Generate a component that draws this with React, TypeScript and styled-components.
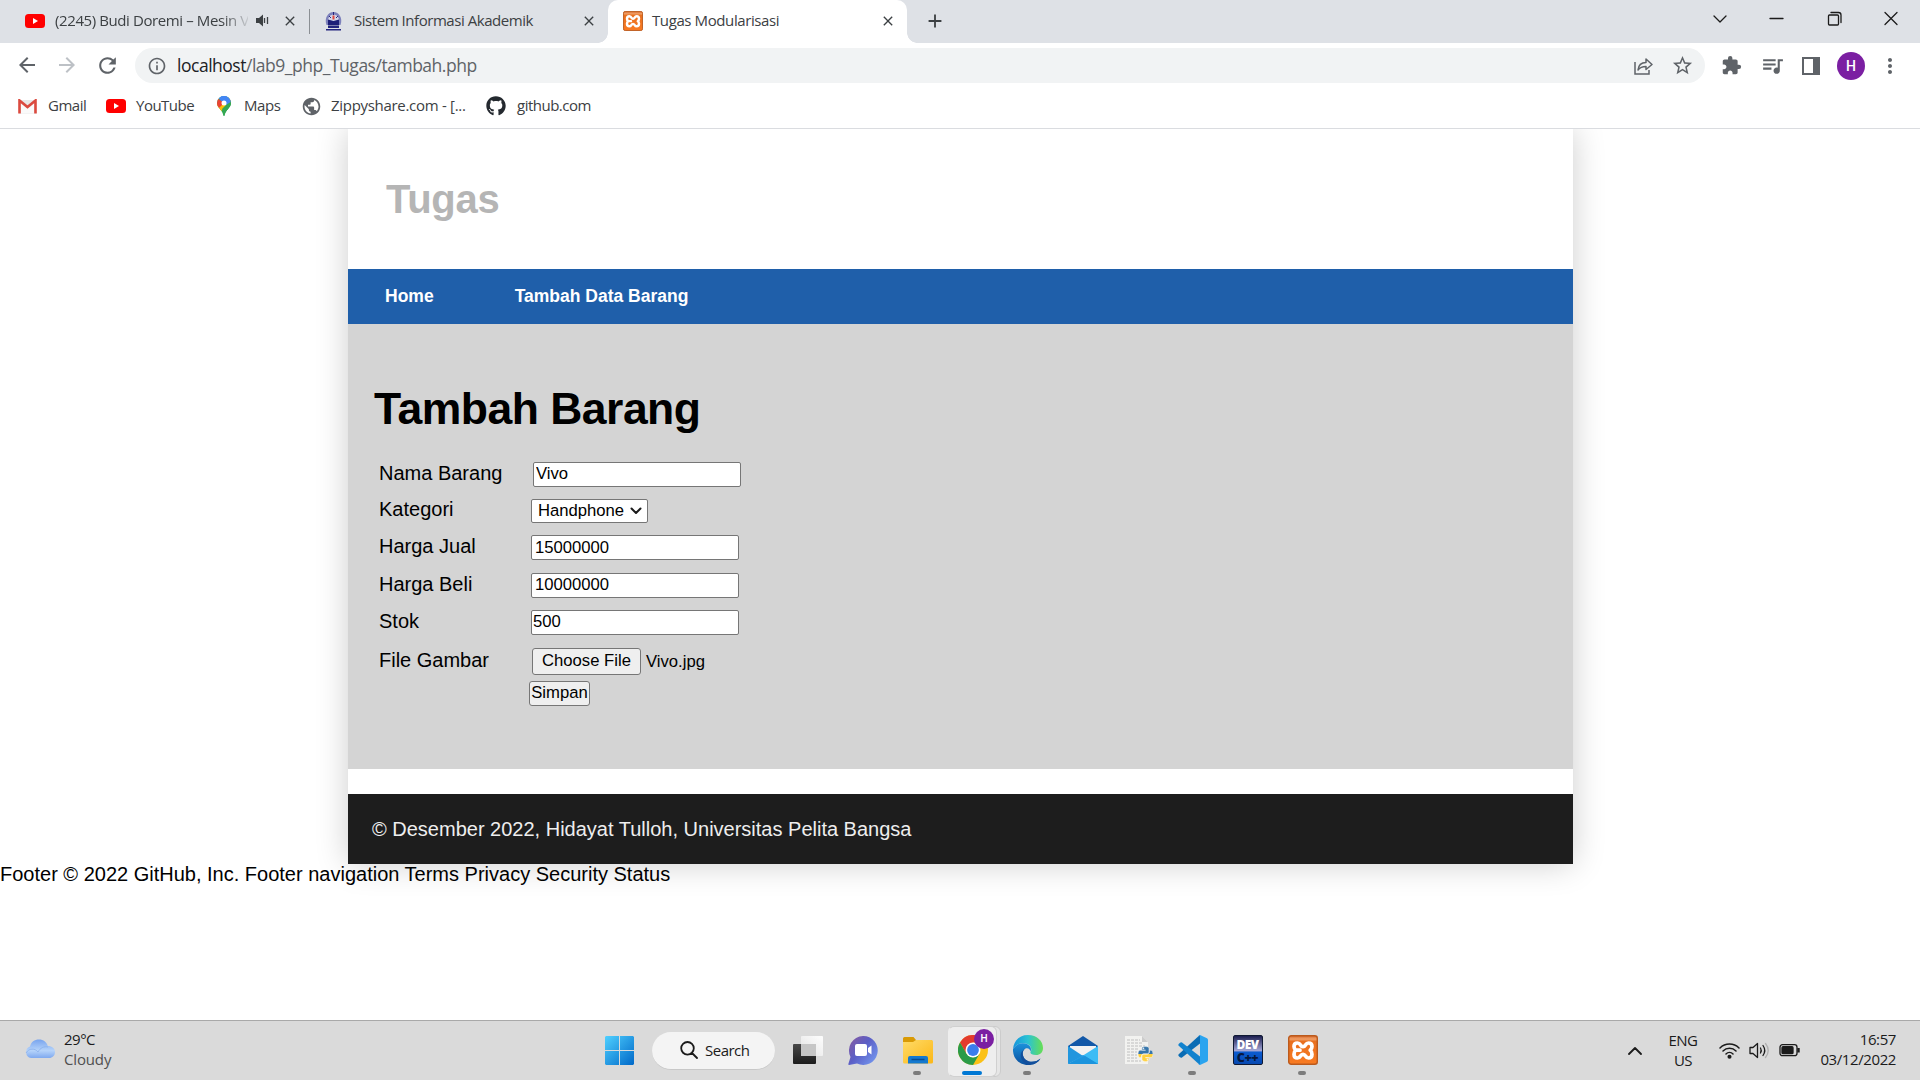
import React from 'react';
import styled, { createGlobalStyle } from 'styled-components';
import { MdExtension, MdQueueMusic, MdStarBorder, MdMoreVert, MdPublic, MdClose, MdAdd, MdInfoOutline, MdArrowBack, MdArrowForward, MdRefresh } from 'react-icons/md';
import { FaGithub, FaPython } from 'react-icons/fa';

const Global = createGlobalStyle`
  * { box-sizing: border-box; }
  body { margin: 0; background: #fff; overflow: hidden; }
  svg { display: block; flex: none; }
`;

const ui = `"Open Sans", "Noto Sans", sans-serif`;
const arial = `"Liberation Sans", Arial, sans-serif`;

const Screen = styled.div`
  width: 1920px;
  height: 1080px;
  display: flex;
  flex-direction: column;
  overflow: hidden;
`;

/* ---------- browser chrome ---------- */
const TabStrip = styled.div`
  height: 43px;
  background: #dee1e6;
  display: flex;
  color: #3c4043;
`;
const Tab = styled.div<{ $w: number; $pad: number; $active?: boolean }>`
  position: relative;
  width: ${p => p.$w}px;
  height: 43px;
  padding: 0 ${p => (p.$active ? 11 : 11)}px 2px ${p => p.$pad}px;
  display: flex;
  align-items: center;
  background: ${p => (p.$active ? '#fff' : 'transparent')};
  border-radius: 10px 10px 0 0;
  ${p => p.$active && `
    &::before, &::after {
      content: ''; position: absolute; bottom: 0; width: 10px; height: 10px;
    }
    &::before { left: -10px; background: radial-gradient(circle at 0 0, transparent 9.5px, #fff 10px); }
    &::after { right: -10px; background: radial-gradient(circle at 100% 0, transparent 9.5px, #fff 10px); }
  `}
`;
const Label = styled.span<{ $w?: number; $gap: number; $ls?: number; $fade?: boolean }>`
  font: 15px/20px ${ui};
  letter-spacing: ${p => p.$ls ?? -0.4}px;
  white-space: nowrap;
  margin-left: ${p => p.$gap}px;
  padding-bottom: 2px;
  ${p => p.$w && `width: ${p.$w}px;`}
  flex: none;
  ${p => p.$fade && 'mask-image: linear-gradient(90deg, #000 86%, transparent 102%);'}
`;
const TabEnd = styled.div`
  margin-left: auto;
  display: flex;
  align-items: center;
  gap: 13px;
`;
const Divider = styled.i`
  width: 1px;
  height: 25px;
  margin-top: 9px;
  background: #8b8f94;
`;
const NewTab = styled.div`
  padding: 10px 0 0 17px;
`;
const Caption = styled.div`
  margin-left: auto;
  padding: 9px 19px 0 0;
  display: flex;
  gap: 37.5px;
  color: #1b1b1b;
`;

const Toolbar = styled.div`
  height: 45px;
  display: flex;
  align-items: center;
  padding: 0 14px 0 15px;
  background: #fff;
  color: #5f6368;
`;
const NavButtons = styled.div`
  display: flex;
  gap: 16px;
  width: 120px;
`;
const Omnibox = styled.div`
  width: 1570px;
  flex: none;
  height: 35px;
  border-radius: 18px;
  background: #f1f3f4;
  display: flex;
  align-items: center;
  padding: 0 11px 0 12px;
  gap: 18px;
`;
const Url = styled.div`
  font: 17.5px/24px ${ui};
  letter-spacing: -0.48px;
  margin: 0 auto 1px -8px;
  color: #5f6368;
  b { font-weight: 400; color: #202124; }
`;
const Actions = styled.div`
  margin-left: 16px;
  display: flex;
  align-items: center;
`;
const Avatar = styled.div<{ $size: number; $gap: number }>`
  width: ${p => p.$size}px;
  height: ${p => p.$size}px;
  margin: 0 ${p => p.$gap}px;
  border-radius: 50%;
  background: #7b1fa2;
  color: #fff;
  font: 500 ${p => p.$size / 2}px/${p => p.$size}px Roboto, sans-serif;
  text-align: center;
`;
const Bookmarks = styled.div`
  height: 41px;
  border-bottom: 1px solid #dadce0;
  display: flex;
  align-items: center;
  padding: 0 0 4px 18px;
  color: #3c4043;
`;
const Bookmark = styled.div<{ $w: number }>`
  display: flex;
  align-items: center;
  width: ${p => p.$w}px;
`;

/* ---------- web page ---------- */
const Viewport = styled.main`
  height: 891px;
  overflow: hidden;
  font-family: ${arial};
  font-size: 20px;
  color: #000;
`;
const Container = styled.div`
  width: 1225px;
  height: 735px;
  margin-left: 348px;
  background: #fff;
  box-shadow: 0 0 31px rgba(0, 0, 0, 0.2);
`;
const Header = styled.header`
  height: 140px;
  padding: 47px 0 0 38px;
  h1 { margin: 0; font-size: 40px; line-height: 46px; letter-spacing: -0.3px; color: #b5b5b5; }
`;
const Menu = styled.nav`
  height: 55px;
  padding-left: 37px;
  display: flex;
  gap: 81px;
  background: #1f5faa;
  color: #fff;
  font-weight: 700;
  font-size: 17.5px;
  line-height: 54px;
`;
const Content = styled.section`
  height: 445px;
  background: #d4d4d4;
  padding: 59px 26px 0 26px;
  h1 { margin: 0 0 28px; font-size: 44.5px; line-height: 51px; letter-spacing: -0.5px; }
`;
const Row = styled.div<{ $h: number }>`
  height: ${p => p.$h}px;
  display: flex;
  align-items: flex-start;
  padding-left: 5px;
`;
const RowLabel = styled.label<{ $lift: number; $w: number }>`
  width: ${p => p.$w}px;
  line-height: 24px;
  margin-top: ${p => -p.$lift}px;
`;
const Input = styled.input<{ $indent: number; $base: number }>`
  width: 208px;
  height: 25px;
  border: 1px solid #767676;
  border-radius: 2px;
  background: #fff;
  padding: 0 0 ${p => p.$base}px ${p => p.$indent}px;
  margin: 0;
  color: #000;
  font: 16.67px/20px ${arial};
  outline: none;
`;
const Select = styled.div`
  width: 117px;
  height: 24px;
  border: 1px solid #767676;
  border-radius: 2px;
  background: #fff;
  display: flex;
  align-items: center;
  justify-content: space-between;
  padding: 0 5px 0 6px;
  font: 16.67px/20px ${arial};
`;
const Button = styled.button<{ $w: number; $h: number }>`
  width: ${p => p.$w}px;
  height: ${p => p.$h}px;
  border: 1px solid #767676;
  border-radius: 3px;
  background: #efefef;
  padding: 0 0 2px;
  margin: 0;
  color: #000;
  font: 16.67px/20px ${arial};
  white-space: nowrap;
`;
const FileName = styled.span`
  font-size: 16.67px;
  line-height: 20px;
  padding: 4px 0 0 5px;
`;
const Footer = styled.footer`
  height: 70px;
  margin-top: 25px;
  padding: 0 24px;
  background: #1d1d1d;
  color: #eee;
  line-height: 71px;
`;
const Trailing = styled.div`
  position: relative;
  line-height: 23px;
  margin-top: -1px;
`;

/* ---------- taskbar ---------- */
const Taskbar = styled.div`
  height: 60px;
  border-top: 1px solid #a9a9a9;
  background: #dadada;
  display: flex;
  font: 15px/20px ${ui};
  color: #1b1b1b;
`;
const Weather = styled.div`
  width: 592px;
  padding: 8px 0 0 25px;
  display: flex;
  gap: 9px;
  svg { margin-top: 10px; }
  p { margin: 0; letter-spacing: -0.5px; }
  p + p { color: #505050; letter-spacing: -0.15px; }
`;
const Apps = styled.div`
  display: flex;
  align-items: center;
`;
const Slot = styled.div<{ $active?: boolean; $open?: boolean }>`
  position: relative;
  width: 55px;
  height: 59px;
  display: flex;
  align-items: center;
  justify-content: center;
  padding-bottom: 1px;
  ${p => p.$active && `
    &::before { content: ''; position: absolute; left: 6px; top: 5px; width: 48px; height: 49px; border-radius: 6px; background: #e6e6e6; border: 1px solid #ccc; }
    &::after { content: ''; position: absolute; left: 3px; top: 5px; width: 47px; height: 49px; border-radius: 6px; background: #eee; border: 1px solid #d0d0d0; border-left-color: #eee; }
  `}
  svg { position: relative; z-index: 1; }
`;
const Indicator = styled.i<{ $wide?: boolean }>`
  position: absolute;
  z-index: 2;
  bottom: 5px;
  left: ${p => (p.$wide ? 17 : 23)}px;
  width: ${p => (p.$wide ? 20 : 8)}px;
  height: 4px;
  border-radius: 2px;
  background: ${p => (p.$wide ? '#0078d4' : '#7c7c7c')};
`;
const Badge = styled.div`
  position: absolute;
  z-index: 2;
  left: 29px;
  top: 8px;
`;
const SearchPill = styled.div`
  width: 123px;
  height: 38px;
  margin: 0 5px 0 5px;
  border-radius: 19px;
  background: #f4f4f4;
  border-bottom: 1px solid #c8c8c8;
  display: flex;
  align-items: center;
  padding-left: 28px;
  gap: 7px;
  letter-spacing: -0.5px;
`;
const Tray = styled.div`
  margin-left: auto;
  padding-right: 24px;
  display: flex;
  align-items: center;
`;
const Stack = styled.div<{ $w: number; $align: string; $ls: number; $lift: number }>`
  width: ${p => p.$w}px;
  text-align: ${p => p.$align};
  letter-spacing: ${p => p.$ls}px;
  padding-bottom: ${p => p.$lift}px;
  p { margin: 0; }
`;
const TrayIcons = styled.div`
  display: flex;
  gap: 9px;
  margin-left: -5px;
  padding-bottom: 2px;
`;

/* ---------- drawings ---------- */
const YouTube = () => (
  <svg width="20" height="14" viewBox="0 0 20 14"><rect width="20" height="14" rx="3.500" fill="#f00" /><path d="M8 4l5 3-5 3z" fill="#fff" /></svg>
);
const Speaker = () => (
  <svg width="13" height="13" viewBox="0 0 13 13" fill="#3c4043"><path d="M0 4h3l4-3.500v12L3 9H0z" /><path d="M8.500 4v5M11.500 3v7" stroke="#3c4043" strokeWidth="1.300" /></svg>
);
const Crest = () => (
  <svg width="19" height="20" viewBox="0 0 19 20">
    <path d="M2.500 14C0 7 4 1 9.500 1S19 7 16.500 14z" fill="#7d81bb" />
    <path d="M4.500 12C3 7 6 3.500 9.500 3.500S16 7 14.500 12z" fill="#d5d6ea" />
    <path d="M4 8.500l5.500 1.500L15 8.500v6H4z" fill="#1d1f78" />
    <path d="M8.500 4.500h2v4h-2z" fill="#e04a3f" /><path d="M9.500 1v3M5 5l2 2M14 5l-2 2" stroke="#26287d" />
    <path d="M4 15h11v2H4zM2 18h15v1.500H2z" fill="#23257e" />
  </svg>
);
const Xampp = ({ size, id }: { size: number; id: string }) => (
  <svg width={size} height={size} viewBox="0 0 30 30">
    <defs><linearGradient id={id} x2="0" y2="1"><stop stopColor="#d9682a" /><stop offset=".12" stopColor="#f0a068" /><stop offset=".2" stopColor="#e9701f" /><stop offset="1" stopColor="#f97b22" /></linearGradient></defs>
    <rect x=".7" y=".7" width="28.600" height="28.600" rx="2.500" fill={`url(#${id})`} stroke="#bb5a1d" strokeWidth="1.400" />
    <path d="M9.500 8c3.500 0 2.500 3.700 5.500 3.700S17 8 20.500 8q3.500 0 3.500 3.500 0 2.300-1.800 3.700 1.800 1.500 1.800 4 0 3.800-3.500 3.800c-3.500 0-2.500-3.700-5.500-3.700S13 23 9.500 23Q6 23 6 19.200q0-2.500 1.800-4H12M7.800 15.200Q6 13.800 6 11.500 6 8 9.500 8" fill="none" stroke="#fff" strokeWidth="3.700" strokeLinejoin="round" strokeLinecap="round" />
  </svg>
);
const Gmail = () => (
  <svg width="19" height="15" viewBox="0 0 19 15"><path d="M1 1h17v13.500H1z" fill="#e8e8e8" /><path d="M3 14V4l6.500 5L16 4v10" fill="#fafafa" /><path d="M1.500 14.500V1.500l8 6.500 8-6.500v13" fill="none" stroke="#db4a3f" strokeWidth="2.600" /></svg>
);
const Maps = () => (
  <svg width="14" height="20" viewBox="0 0 14 20">
    <defs><clipPath id="pin"><path d="M7 0a7 7 0 0 1 7 7c0 5-5.500 6.500-6.300 12.500q-.7 1-1.400 0C5.500 13.500 0 12 0 7a7 7 0 0 1 7-7z" /></clipPath></defs>
    <g clipPath="url(#pin)"><path d="M0 0h14v20H0z" fill="#34a853" /><path d="M0 0h14L7 9z" fill="#4285f4" /><path d="M12 1l3 5-12 10-4-7z" fill="#fbbc04" /><path d="M14 4v8L7 18 5 13z" fill="#34a853" /><path d="M0 2l7 5-7 7z" fill="#ea4335" /><path d="M3 0h12v5L9 9 5 5z" fill="#4285f4" /></g>
    <circle cx="7" cy="7" r="2.500" fill="#fff" />
  </svg>
);
const Share = () => (
  <svg width="19" height="18" viewBox="0 0 19 18" fill="none" stroke="#5f6368" strokeWidth="1.500"><path d="M1 5v12h14v-4" /><path d="M4 13c.5-5 3.500-7.500 8-7.500V2l6 5.500-6 5V9.500c-4 0-6 .8-8 3.500z" strokeLinejoin="round" /></svg>
);
const SidePanel = () => (
  <svg width="18" height="18" viewBox="0 0 18 18"><path d="M1 1h16v16H1z" fill="none" stroke="#5f6368" strokeWidth="2" /><path d="M11 1h6v16h-6z" fill="#5f6368" /></svg>
);
const Cloud = () => (
  <svg width="30" height="20" viewBox="0 0 30 20">
    <defs><linearGradient id="cl" x2="0" y2="1"><stop stopColor="#78a4ee" /><stop offset=".6" stopColor="#b5d3fa" /><stop offset="1" stopColor="#7fa9ef" /></linearGradient></defs>
    <path d="M6 19a6 6 0 0 1-1-11.500C6 3 9.500.5 14 .5c4.500 0 7.500 2.500 8.800 6.500C27 7 30 9.500 30 13s-2.500 6-6 6z" fill="url(#cl)" />
    <path d="M1 14c3-5 9-5 12-1 2-4 6-6 10-5" fill="none" stroke="#86ace9" strokeWidth="1" opacity=".7" />
  </svg>
);
const Windows = () => (
  <svg width="29" height="29" viewBox="0 0 29 29">
    <defs><linearGradient id="win" x2="1" y2="1"><stop stopColor="#4fd0ff" /><stop offset="1" stopColor="#0068c8" /></linearGradient></defs>
    <path d="M1 0h13v14H0V1zM15 0h13l1 1v13H15zM0 15h14v14H1l-1-1zM15 15h14v13l-1 1H15z" fill="url(#win)" />
  </svg>
);
const TaskView = () => (
  <svg width="30" height="29" viewBox="0 0 30 29">
    <defs>
      <linearGradient id="tv" x2="0" y2="1"><stop stopColor="#484848" /><stop offset="1" stopColor="#1c1c1c" /></linearGradient>
      <linearGradient id="tw" x1="1" x2="0" y2="1"><stop stopColor="#fff" /><stop offset="1" stopColor="#e4e4e4" /></linearGradient>
    </defs>
    <rect y="8" width="23" height="20" rx="1" fill="url(#tv)" /><rect x="8" y="0" width="22" height="20" rx="1" fill="url(#tw)" opacity=".95" /><path d="M8 8h15v12H8z" fill="#c6c6c6" />
  </svg>
);
const Chat = () => (
  <svg width="30" height="29" viewBox="0 0 30 29">
    <defs><linearGradient id="ch" x1="0" x2="1" y2=".8"><stop stopColor="#8b5a9c" /><stop offset=".5" stopColor="#5b5fc7" /><stop offset="1" stopColor="#7396ee" /></linearGradient></defs>
    <path d="M15 0a14.500 14.500 0 1 1-6 27.600L1 29q-1-.2-.5-1.500L2.500 21A14.500 14.500 0 0 1 15 0z" fill="url(#ch)" />
    <rect x="7" y="8" width="12" height="12" rx="2" fill="#fff" /><path d="M20 12l3.500-2.500v9L20 16z" fill="#fff" />
  </svg>
);
const Folder = () => (
  <svg width="30" height="27" viewBox="0 0 30 27">
    <defs><linearGradient id="fo" x2="1" y2="1"><stop stopColor="#ffdb68" /><stop offset="1" stopColor="#fbb716" /></linearGradient></defs>
    <path d="M0 1.500Q0 0 1.500 0h9L13 3h16v4H0z" fill="#d99a05" /><path d="M0 5h10l3-2h15.500Q30 3 30 4.500V25q0 1.500-1.500 1.500h-27Q0 26.500 0 25z" fill="url(#fo)" />
    <path d="M5 26.500V21q0-2 2-2h16q2 0 2 2v5.500z" fill="#1479cf" /><path d="M8.500 22.500h13" stroke="#084c91" strokeWidth="1.500" />
  </svg>
);
const Chrome = () => (
  <svg width="30" height="30" viewBox="0 0 30 30">
    <circle cx="15" cy="15" r="15" fill="#fbc116" />
    <path d="M2 7.500A15 15 0 0 1 28 7.500H15L8.500 18.700z" fill="#e33b2e" />
    <path d="M2 7.500L8.500 18.750 15 22.500 21.500 18.700 15 30A15 15 0 0 1 2 7.500z" fill="#2b9b48" />
    <circle cx="15" cy="15" r="7.500" fill="#fff" /><circle cx="15" cy="15" r="5.900" fill="#3b7ded" />
  </svg>
);
const Edge = () => (
  <svg width="30" height="30" viewBox="0 0 30 30">
    <defs>
      <linearGradient id="e1" x2="1"><stop stopColor="#1594dd" /><stop offset=".5" stopColor="#2bc3d2" /><stop offset="1" stopColor="#68df52" /></linearGradient>
      <linearGradient id="e2" x2="0" y2="1"><stop stopColor="#1b92dc" /><stop offset="1" stopColor="#0b4f9e" /></linearGradient>
    </defs>
    <path d="M0 14C1 5 7 0 15 0c9 0 15 6 15 13 0 4.500-3 7-7 7-4 0-6-1.500-5.500-3 1.500-2 1-6-3-8C9 7 3 9 0 14z" fill="url(#e1)" />
    <path d="M0 14C3 9 9 7 14 9c4 2 4.500 5 3.500 7.500-.5-3-3-4-5-3C8.500 15.500 9 22 13 25c5 3.500 11 1.500 14.500-1.500C25 28 20 30 15 30 6 30-.5 23 0 14z" fill="url(#e2)" />
    <path d="M12.500 13.500C8.500 15.500 9 22 13 25c5 3.500 11 1.500 14.500-1.500C25 28 20 30 15 30 8 27 4 18 12.500 13.500z" fill="#124e9b" />
  </svg>
);
const Mail = () => (
  <svg width="30" height="28" viewBox="0 0 30 28">
    <path d="M0 10L15 0l15 10v6H0z" fill="#1258a8" /><path d="M2 10h26v10H2z" fill="#f2f2f2" />
    <path d="M0 10l15 10-15 8z" fill="#2196de" /><path d="M30 10L15 19.500 2 28h28z" fill="#3cbcf5" /><path d="M0 28l15-9 15 9z" fill="#219be3" /><path d="M0 28h30L17 20z" fill="#1c94dd" />
  </svg>
);
const PythonFile = () => (
  <svg width="30" height="30" viewBox="0 0 30 30">
    <defs><linearGradient id="py" x2="0" y2="1"><stop offset=".5" stopColor="#3776ab" /><stop offset=".5" stopColor="#ffd140" /></linearGradient></defs>
    <path d="M2 1h17l6 6v22H2z" fill="#f2f2f0" /><path d="M19 1v6h6z" fill="#ccc" />
    <path d="M4 5h13M4 8h15M4 11h18M4 14h12M4 17h10M4 20h10M4 23h10M4 26h14" stroke="#bdbdbd" strokeWidth="1.200" strokeDasharray="3 1" />
    <FaPython x="14" y="10.500" size={17} fill="url(#py)" stroke="#fff" strokeWidth={12} />
  </svg>
);
const VSCode = () => (
  <svg width="30" height="30" viewBox="0 0 30 30">
    <path d="M22 0v8.500L4 22.500Q3 23 2 22.300L.6 21Q0 20 .7 19.300L21 .7z" fill="#0a6cb4" />
    <path d="M22 30v-8.500L4 7.500Q3 7 2 7.700L.6 9Q0 10 .7 10.700L21 29.300z" fill="#1182ce" />
    <path d="M22 0l7 3.300q1 .6 1 1.700v20q0 1.100-1 1.700L22 30q-1 .2-1.500-.6 1.500.5 1.500-1.400V2q0-2-1.500-1.400Q21-.2 22 0z" fill="#2ba4ef" />
  </svg>
);
const DevTile = styled.div`
  width: 30px;
  height: 30px;
  border: 1px solid #101a33;
  border-radius: 2px;
  background: linear-gradient(#1c1e50, #a3a6d6 52%, #0b5bd0 58%, #0748b0);
  text-align: center;
  color: #fff;
  font: 800 12px/17px ${ui};
  letter-spacing: -0.5px;
  div { color: #06183e; font-size: 12.500px; line-height: 10px; white-space: nowrap; }
`;
const Stroke = ({ d, w, h, sw = 1.3 }: { d: string; w: number; h: number; sw?: number }) => (
  <svg width={w} height={h} viewBox={`0 0 ${w} ${h}`} fill="none" stroke="#1b1b1b" strokeWidth={sw} strokeLinecap="round" strokeLinejoin="round"><path d={d} /></svg>
);
const TrayGlyphs = () => (
  <TrayIcons>
    <svg width="21" height="18" viewBox="0 0 21 18" fill="none" stroke="#1b1b1b" strokeWidth="1.500" strokeLinecap="round"><path d="M1 7a13.400 13.400 0 0 1 19 0M4 10a9.200 9.200 0 0 1 13 0M7 13a5 5 0 0 1 7 0" /><circle cx="10.500" cy="15.800" r="1.300" fill="#1b1b1b" /></svg>
    <svg width="21" height="18" viewBox="0 0 21 18" fill="none" stroke="#1b1b1b" strokeWidth="1.300" strokeLinejoin="round" strokeLinecap="round"><path d="M1 6.500h3l4.500-4v14l-4.500-4H1zM11.500 7q1.500 2.500 0 5M14 4.500q3.500 5 0 10" /><path d="M16.500 2.500q5.500 7 0 14" stroke="#b0b0b0" /></svg>
    <svg width="21" height="18" viewBox="0 0 21 18" fill="none" stroke="#1b1b1b" strokeWidth="1.300"><rect x="1" y="3.700" width="17" height="11" rx="2.500" /><rect x="3" y="5.700" width="11" height="7" rx="1" fill="#1b1b1b" /><path d="M19.500 7v4.500" strokeWidth="2.400" /></svg>
  </TrayIcons>
);

const fields = [
  { label: 'Nama Barang', h: 37, lift: 1, w: 154, indent: 2, base: 2, value: 'Vivo' },
  { label: 'Kategori', h: 36, lift: 2, w: 152, select: 'Handphone' },
  { label: 'Harga Jual', h: 38, lift: 1, w: 152, indent: 3, base: 0, value: '15000000' },
  { label: 'Harga Beli', h: 37, lift: 1, w: 152, indent: 3, base: 2, value: '10000000' },
  { label: 'Stok', h: 38, lift: 1, w: 152, indent: 1, base: 1, value: '500' },
];

export default function App() {
  return (
    <Screen>
      <Global />
      <TabStrip>
        <Tab $w={309} $pad={25}><YouTube /><Label $gap={10} $w={193} $fade>(2245) Budi Doremi – Mesin V</Label>
          <TabEnd><Speaker /><MdClose size={16} /></TabEnd></Tab>
        <Divider />
        <Tab $w={298} $pad={14}><Crest /><Label $gap={11} $ls={-0.45}>Sistem Informasi Akademik</Label>
          <TabEnd><MdClose size={16} /></TabEnd></Tab>
        <Tab $w={299} $pad={15} $active><Xampp size={20} id="xa" /><Label $gap={9}>Tugas Modularisasi</Label>
          <TabEnd><MdClose size={16} /></TabEnd></Tab>
        <NewTab><MdAdd size={22} /></NewTab>
        <Caption>
          <Stroke w={20} h={20} d="M5 7l6 6 6-6" />
          <Stroke w={20} h={20} d="M4 9.500h13" />
          <Stroke w={20} h={20} d="M5.500 6h8q1 0 1 1v8q0 1-1 1h-8q-1 0-1-1V7q0-1 1-1M7 3.500h7.500q2.500 0 2.500 2.500v7.500" />
          <Stroke w={20} h={20} d="M4 3.500l12 12M16 3.500l-12 12" />
        </Caption>
      </TabStrip>
      <Toolbar>
        <NavButtons>
          <MdArrowBack size={24} /><MdArrowForward size={24} color="#bdc1c6" /><MdRefresh size={25} />
        </NavButtons>
        <Omnibox>
          <MdInfoOutline size={20} />
          <Url><b>localhost</b>/lab9_php_Tugas/tambah.php</Url>
          <Share /><MdStarBorder size={23} />
        </Omnibox>
        <Actions>
          <MdExtension size={21} style={{ marginRight: 18 }} />
          <MdQueueMusic size={25} style={{ marginRight: 17 }} />
          <SidePanel />
          <Avatar $size={28} $gap={17}>H</Avatar>
          <MdMoreVert size={24} style={{ marginLeft: -4 }} />
        </Actions>
      </Toolbar>
      <Bookmarks>
        <Bookmark $w={88}><Gmail /><Label $gap={11} $ls={-0.5}>Gmail</Label></Bookmark>
        <Bookmark $w={111}><YouTube /><Label $gap={10} $ls={-0.5}>YouTube</Label></Bookmark>
        <Bookmark $w={84}><Maps /><Label $gap={13}>Maps</Label></Bookmark>
        <Bookmark $w={185}><MdPublic size={21} color="#5f6368" /><Label $gap={9} $ls={-0.3}>Zippyshare.com - [...</Label></Bookmark>
        <Bookmark $w={120}><FaGithub size={20} color="#24292f" /><Label $gap={11} $ls={-0.5}>github.com</Label></Bookmark>
      </Bookmarks>

      <Viewport>
        <Container>
          <Header><h1>Tugas</h1></Header>
          <Menu><span>Home</span><span>Tambah Data Barang</span></Menu>
          <Content>
            <h1>Tambah Barang</h1>
            {fields.map(f => (
              <Row key={f.label} $h={f.h}>
                <RowLabel $lift={f.lift} $w={f.w}>{f.label}</RowLabel>
                {f.select
                  ? <Select>{f.select}<Stroke w={12} h={8} sw={2} d="M1.500 1.500l4.500 4.500 4.500-4.500" /></Select>
                  : <Input $indent={f.indent ?? 2} $base={f.base ?? 2} defaultValue={f.value} />}
              </Row>
            ))}
            <Row $h={33}>
              <RowLabel $lift={0} $w={153}>File Gambar</RowLabel>
              <Button $w={109} $h={27}>Choose File</Button><FileName>Vivo.jpg</FileName>
            </Row>
            <Row $h={25}><RowLabel $lift={0} $w={150} /><Button $w={61} $h={25}>Simpan</Button></Row>
          </Content>
          <Footer>© Desember 2022, Hidayat Tulloh, Universitas Pelita Bangsa</Footer>
        </Container>
        <Trailing>Footer © 2022 GitHub, Inc. Footer navigation Terms Privacy Security Status</Trailing>
      </Viewport>

      <Taskbar>
        <Weather><Cloud /><div><p>29°C</p><p>Cloudy</p></div></Weather>
        <Apps>
          <Slot><Windows /></Slot>
          <SearchPill><Stroke w={18} h={18} sw={1.8} d="M7.500 1a6.300 6.300 0 1 1 0 12.600a6.300 6.300 0 1 1 0-12.600M12 12l5 5" />Search</SearchPill>
          <Slot><TaskView /></Slot>
          <Slot><Chat /></Slot>
          <Slot><Folder /><Indicator /></Slot>
          <Slot $active><Chrome /><Indicator $wide /><Badge><Avatar $size={20} $gap={0}>H</Avatar></Badge></Slot>
          <Slot><Edge /><Indicator /></Slot>
          <Slot><Mail /></Slot>
          <Slot><PythonFile /></Slot>
          <Slot><VSCode /><Indicator /></Slot>
          <Slot><DevTile>DEV<div>C++</div></DevTile></Slot>
          <Slot><Xampp size={30} id="xb" /><Indicator /></Slot>
        </Apps>
        <Tray>
          <Stroke w={14} h={8} sw={1.8} d="M1 7l6-6 6 6" />
          <Stack $w={82} $align="center" $ls={-0.5} $lift={1}><p>ENG</p><p>US</p></Stack>
          <TrayGlyphs />
          <Stack $w={96} $align="right" $ls={-0.4} $lift={3}><p>16:57</p><p>03/12/2022</p></Stack>
        </Tray>
      </Taskbar>
    </Screen>
  );
}
